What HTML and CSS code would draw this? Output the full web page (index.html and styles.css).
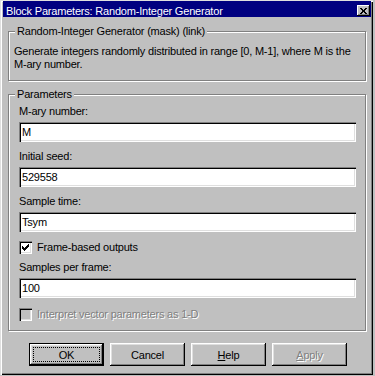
FILE: index.html
```html
<!DOCTYPE html>
<html>
<head>
  <title>Block Parameters: Random-Integer Generator</title>
  <link rel="stylesheet" href="styles.css">
</head>
<body>
  <div class="window">
    <div class="titlebar">
      <span class="title">Block Parameters: Random-Integer Generator</span>
      <span class="close-btn">
        <svg width="13" height="11" viewBox="0 0 13 11" shape-rendering="crispEdges">
          <rect x="3" y="3" width="2" height="1"/><rect x="8" y="3" width="2" height="1"/>
          <rect x="4" y="4" width="2" height="1"/><rect x="7" y="4" width="2" height="1"/>
          <rect x="5" y="5" width="3" height="2"/>
          <rect x="4" y="7" width="2" height="1"/><rect x="7" y="7" width="2" height="1"/>
          <rect x="3" y="8" width="2" height="1"/><rect x="8" y="8" width="2" height="1"/>
        </svg>
      </span>
    </div>

    <fieldset class="group group-mask">
      <legend>Random-Integer Generator (mask) (link)</legend>
      <p class="description">Generate integers randomly distributed in range [0, M-1], where M is the M-ary number.</p>
    </fieldset>

    <fieldset class="group group-params">
      <legend>Parameters</legend>
      <div class="params">
        <div class="field-label">M-ary number:</div>
        <input class="field-input" type="text" value="M">
        <div class="field-label">Initial seed:</div>
        <input class="field-input" type="text" value="529558">
        <div class="field-label">Sample time:</div>
        <input class="field-input" type="text" value="Tsym">
        <div class="check-row">
          <span class="checkbox">
            <svg width="9" height="9" viewBox="0 0 9 9" shape-rendering="crispEdges">
              <rect x="7" y="1" width="1" height="1"/>
              <rect x="6" y="2" width="2" height="1"/>
              <rect x="1" y="3" width="1" height="1"/><rect x="5" y="3" width="3" height="1"/>
              <rect x="1" y="4" width="2" height="1"/><rect x="4" y="4" width="3" height="1"/>
              <rect x="1" y="5" width="5" height="1"/>
              <rect x="2" y="6" width="3" height="1"/>
              <rect x="3" y="7" width="1" height="1"/>
            </svg>
          </span>
          <span>Frame-based outputs</span>
        </div>
        <div class="field-label">Samples per frame:</div>
        <input class="field-input" type="text" value="100">
        <div class="check-row disabled">
          <span class="checkbox"></span>
          <span>Interpret vector parameters as 1-D</span>
        </div>
      </div>
    </fieldset>

    <div class="buttons">
      <button class="btn btn-default"><span class="btn-focus">OK</span></button>
      <button class="btn"><span class="btn-focus">Cancel</span></button>
      <button class="btn"><span class="btn-focus"><u>H</u>elp</span></button>
      <button class="btn btn-disabled"><span class="btn-focus"><u>A</u>pply</span></button>
    </div>
  </div>
</body>
</html>
```

FILE: styles.css
```css
* {
  margin: 0;
  padding: 0;
  box-sizing: border-box;
}

body {
  width: 375px;
  height: 376px;
  background: #c0c0c0;
  font-family: "Liberation Sans", Arial, sans-serif;
  font-size: 11px;
  letter-spacing: -0.2px;
  color: #000;
  overflow: hidden;
}

.window {
  width: 373px;
  height: 375px;
  padding: 1px 2px 2px 3px;
  background: #c0c0c0;
  box-shadow: inset 1px 1px 0 #dfdfdf, inset 2px 2px 0 #fff, inset -1px -1px 0 #000, inset -2px -2px 0 #808080;
}

/* Title bar */
.titlebar {
  height: 16px;
  display: flex;
  justify-content: space-between;
  padding: 0 1px 0 3px;
  background: #000080;
  color: #fff;
}

.title {
  padding-top: 5px;
  line-height: 11px;
  white-space: nowrap;
}

.close-btn {
  width: 13px;
  height: 11px;
  margin-top: 4px;
  display: flex;
  background: #c0c0c0;
  box-shadow: inset -1px -1px 0 #000, inset 1px 1px 0 #fff, inset -2px -2px 0 #808080;
}

/* Group boxes */
.group {
  border: 1px solid #808080;
  box-shadow: 1px 1px 0 #fff, inset 1px 1px 0 #fff;
  margin: 0 5px;
  padding: 0 4px 0 5px;
  min-width: 0;
}

.group legend {
  line-height: 13px;
  padding: 0 2px;
  margin-left: 1px;
  background: #c0c0c0;
}

.group-mask {
  margin-top: 8px;
  padding-top: 7px;
  padding-bottom: 9px;
}

.description {
  line-height: 13px;
}

.group-params {
  margin-top: 7px;
  padding-top: 4px;
  padding-bottom: 9px;
}

.params {
  display: flex;
  flex-direction: column;
  padding: 0 5px;
}

.field-label {
  line-height: 13px;
  margin-bottom: 4px;
}

.field-input {
  height: 20px;
  margin-bottom: 8px;
  padding: 0 3px;
  border: none;
  outline: none;
  background: #fff;
  font-family: inherit;
  font-size: 11px;
  letter-spacing: -0.2px;
  color: #000;
  box-shadow: inset 1px 1px 0 #808080, inset 2px 2px 0 #000, inset -1px -1px 0 #fff, inset -2px -2px 0 #dfdfdf;
}

/* Checkboxes */
.check-row {
  display: flex;
  align-items: center;
  gap: 5px;
  height: 13px;
  line-height: 13px;
  margin-top: 1px;
  margin-bottom: 7px;
}

.check-row.disabled {
  margin-top: 2px;
  margin-bottom: 0;
  color: #808080;
  text-shadow: 1px 1px 0 #fff;
}

.checkbox {
  width: 13px;
  height: 13px;
  flex-shrink: 0;
  padding: 2px;
  display: flex;
  background: #fff;
  box-shadow: inset 1px 1px 0 #808080, inset 2px 2px 0 #000, inset -1px -1px 0 #fff, inset -2px -2px 0 #dfdfdf;
}

.disabled .checkbox {
  background: #c0c0c0;
}

/* Buttons */
.buttons {
  display: flex;
  gap: 6px;
  margin: 12px 0 0 26px;
}

.btn {
  width: 75px;
  height: 23px;
  padding: 3px;
  display: flex;
  border: none;
  background: #c0c0c0;
  font-family: inherit;
  font-size: 11px;
  letter-spacing: -0.2px;
  color: #000;
  box-shadow: inset -1px -1px 0 #000, inset 1px 1px 0 #fff, inset -2px -2px 0 #808080, inset 2px 2px 0 #dfdfdf;
}

.btn-focus {
  flex: 1;
  display: flex;
  align-items: center;
  justify-content: center;
  border: 1px dotted transparent;
}

.btn-default {
  border: 1px solid #000;
  box-shadow: inset -1px -1px 0 #000, inset 1px 1px 0 #fff, inset -2px -2px 0 #808080, inset 2px 2px 0 #dfdfdf;
}

.btn-default .btn-focus {
  border-color: #000;
}

.btn-disabled {
  color: #808080;
  text-shadow: 1px 1px 0 #fff;
}
```
